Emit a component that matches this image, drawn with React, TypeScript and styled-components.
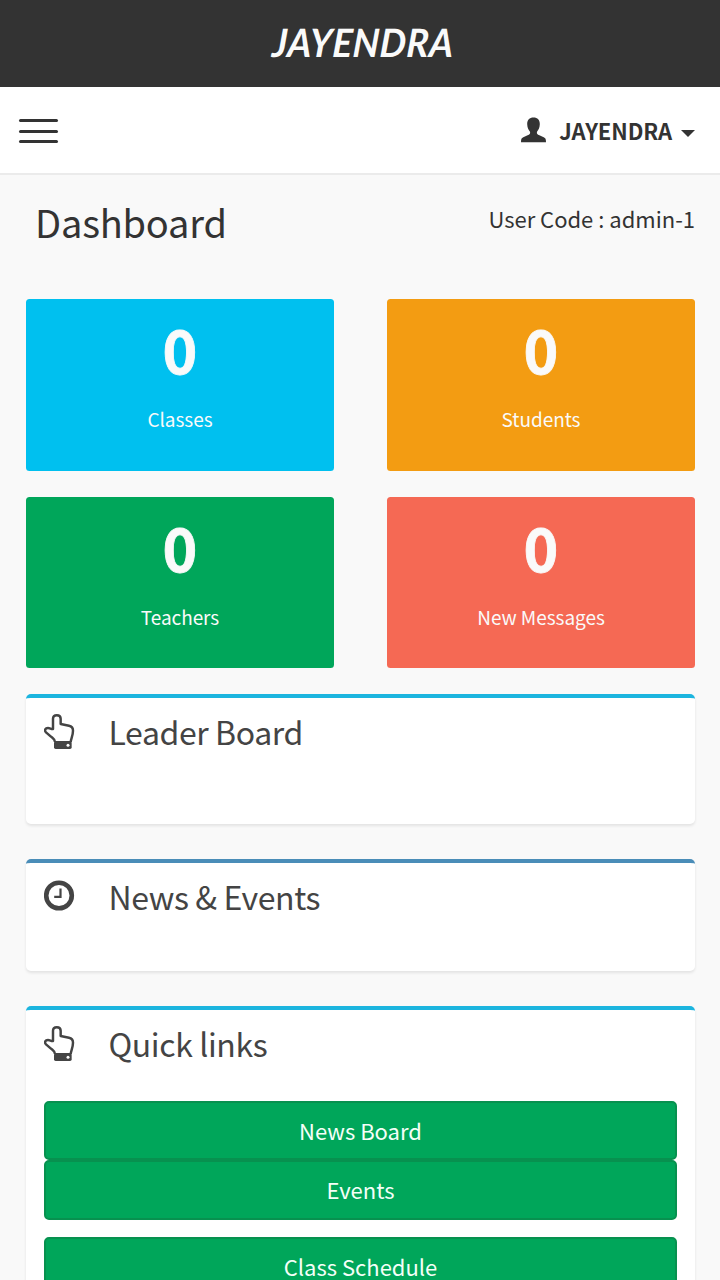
import React from "react";
import styled, { createGlobalStyle } from "styled-components";

const GlobalStyle = createGlobalStyle`
  * { box-sizing: border-box; }
  html, body { margin: 0; padding: 0; height: 100%; overflow: hidden; }
  body {
    background: #f9f9f9;
    color: #333;
    font-family: "Noto Sans CJK SC", "Open Sans", sans-serif;
  }
`;

const Page = styled.div`
  width: 720px;
  height: 1280px;
  overflow: hidden;
`;

const BrandBar = styled.header`
  height: 87px;
  background: #333;
  display: flex;
  justify-content: center;
  padding: 18px 0 0 5px;
`;

const Brand = styled.span`
  color: #fafafa;
  font-family: Lato, sans-serif;
  font-style: italic;
  font-weight: 700;
  font-size: 39px;
  line-height: 48px;
  letter-spacing: 0.5px;
  transform: scaleX(0.95) skewX(-4deg);
  white-space: nowrap;
`;

const NavBar = styled.nav`
  height: 88px;
  background: #fff;
  border-bottom: 2px solid #ebebeb;
  display: flex;
  justify-content: space-between;
  align-items: center;
  padding: 2px 25px 0 19px;
`;

const MenuButton = styled.button`
  border: 0;
  padding: 0;
  background: none;
  display: flex;
  flex-direction: column;
  gap: 7.6px;
`;

const MenuLine = styled.span`
  width: 39px;
  height: 3px;
  border-radius: 2px;
  background: #333;
`;

const UserMenu = styled.div`
  display: flex;
  align-items: center;
  font-size: 22px;
  font-weight: 700;
  line-height: 30px;
  padding-bottom: 2px;
`;

const UserName = styled.span`
  margin: 0 9px 0 13px;
  letter-spacing: -0.1px;
`;

const Caret = styled.span`
  margin-top: 7px;
  border: 7px solid transparent;
  border-top-color: #333;
  border-bottom: 0;
`;

const TitleRow = styled.div`
  height: 124px;
  display: flex;
  justify-content: space-between;
  padding: 22px 25px 0 35px;
`;

const Title = styled.h1`
  margin: 0;
  font-size: 38px;
  font-weight: 400;
  line-height: 50px;
  letter-spacing: -0.2px;
`;

const UserCode = styled.span`
  font-size: 22px;
  line-height: 42px;
`;

const Cards = styled.div`
  display: grid;
  grid-template-columns: 308px 308px;
  grid-auto-rows: 171.5px;
  gap: 26.3px 53px;
  padding: 0 26px;
`;

const Card = styled.div<{ $color: string }>`
  background: ${(p) => p.$color};
  border-radius: 3.5px;
  color: #fafafa;
  display: flex;
  flex-direction: column;
  align-items: center;
  padding-top: 15px;
`;

const Count = styled.strong`
  font-size: 59px;
  font-weight: 700;
  line-height: 70px;
  -webkit-text-stroke: 0.8px currentColor;
`;

const CardLabel = styled.span`
  margin-top: 20px;
  font-size: 19px;
  line-height: 30px;
  letter-spacing: -0.05px;
`;

const Panels = styled.main`
  display: flex;
  flex-direction: column;
  gap: 35px;
  padding: 26px 25px 0 26px;
`;

const Panel = styled.section<{ $accent: string; $height: number }>`
  height: ${(p) => p.$height}px;
  background: #fff;
  border-top: 4px solid ${(p) => p.$accent};
  border-radius: 5px;
  box-shadow: 0 2px 3px rgba(0, 0, 0, 0.09);
  padding: 12px 18px 0;
`;

const PanelHeader = styled.div`
  display: flex;
  align-items: flex-start;
  color: #444;
`;

const IconSlot = styled.span`
  width: 64.5px;
  height: 43px;
  padding-top: 3px;
  svg { display: block; }
`;

const PanelTitle = styled.h2`
  margin: 0;
  font-size: 32px;
  font-weight: 400;
  line-height: 43px;
  letter-spacing: -0.4px;
`;

const Links = styled.div`
  margin-top: 36px;
  display: flex;
  flex-direction: column;
`;

const LinkButton = styled.button<{ $spaced?: boolean }>`
  margin: ${(p) => (p.$spaced ? "17.6px" : "0")} 0 0;
  height: 59.5px;
  border: 2px solid #07914f;
  border-radius: 5px;
  background: #00a65a;
  color: #f4fff8;
  font-family: inherit;
  font-size: 22px;
  line-height: 30px;
  padding: 0 0 2px;
`;

const HandIcon = () => (
  <svg width="31" height="37" viewBox="0 0 93 111" fill="none">
    <path
      d="M33 87C33 79 28 77 20 70L6 58C0 52 4 45 12 45C18 45 22 49 27 48V17C27 3 50 3 50 17V33L75 38C85 40 87 45 87 53C87 67 81 77 80 87"
      stroke="currentColor"
      strokeWidth="7.4"
      strokeLinejoin="round"
    />
    <rect x="30" y="84" width="53" height="24" rx="5" fill="currentColor" />
    <circle cx="72" cy="97" r="4.5" fill="#fff" />
  </svg>
);

const ClockIcon = () => (
  <svg width="31" height="37" viewBox="0 0 31 37" fill="none" stroke="currentColor">
    <circle cx="15" cy="17.5" r="12.8" strokeWidth="4.6" />
    <path d="M16.5 10.5v8.3h-6.3" strokeWidth="2.2" />
  </svg>
);

const UserIcon = () => (
  <svg width="25" height="26" viewBox="0 0 25 26" fill="#333">
    <path d="M12.5 0.5C8.5 .5 6 3.2 6.2 7.3C6.3 10.8 7.6 13.2 9 14.7C9.6 16.7 8.5 17.6 6.6 18.3L2.3 20.2C.5 21 0 22 0 25.3H25C25 22 24.5 21 22.7 20.2L18.4 18.3C16.5 17.6 15.4 16.7 16 14.7C17.4 13.2 18.7 10.8 18.8 7.3C19 3.2 16.5 .5 12.5 .5Z" />
  </svg>
);

const stats = [
  { label: "Classes", color: "#00c0ef" },
  { label: "Students", color: "#f39c12" },
  { label: "Teachers", color: "#00a65a" },
  { label: "New Messages", color: "#f56954" },
];

export default function App() {
  return (
    <Page>
      <GlobalStyle />
      <BrandBar>
        <Brand>JAYENDRA</Brand>
      </BrandBar>
      <NavBar>
        <MenuButton aria-label="Menu">
          <MenuLine />
          <MenuLine />
          <MenuLine />
        </MenuButton>
        <UserMenu>
          <UserIcon />
          <UserName>JAYENDRA</UserName>
          <Caret />
        </UserMenu>
      </NavBar>
      <TitleRow>
        <Title>Dashboard</Title>
        <UserCode>User Code : admin-1</UserCode>
      </TitleRow>
      <Cards>
        {stats.map((s) => (
          <Card key={s.label} $color={s.color}>
            <Count>0</Count>
            <CardLabel>{s.label}</CardLabel>
          </Card>
        ))}
      </Cards>
      <Panels>
        <Panel $accent="#1cb5df" $height={129.5}>
          <PanelHeader>
            <IconSlot><HandIcon /></IconSlot>
            <PanelTitle>Leader Board</PanelTitle>
          </PanelHeader>
        </Panel>
        <Panel $accent="#4a8db8" $height={112}>
          <PanelHeader>
            <IconSlot><ClockIcon /></IconSlot>
            <PanelTitle>News &amp; Events</PanelTitle>
          </PanelHeader>
        </Panel>
        <Panel $accent="#1cb5df" $height={400}>
          <PanelHeader>
            <IconSlot><HandIcon /></IconSlot>
            <PanelTitle>Quick links</PanelTitle>
          </PanelHeader>
          <Links>
            <LinkButton>News Board</LinkButton>
            <LinkButton>Events</LinkButton>
            <LinkButton $spaced>Class Schedule</LinkButton>
          </Links>
        </Panel>
      </Panels>
    </Page>
  );
}
